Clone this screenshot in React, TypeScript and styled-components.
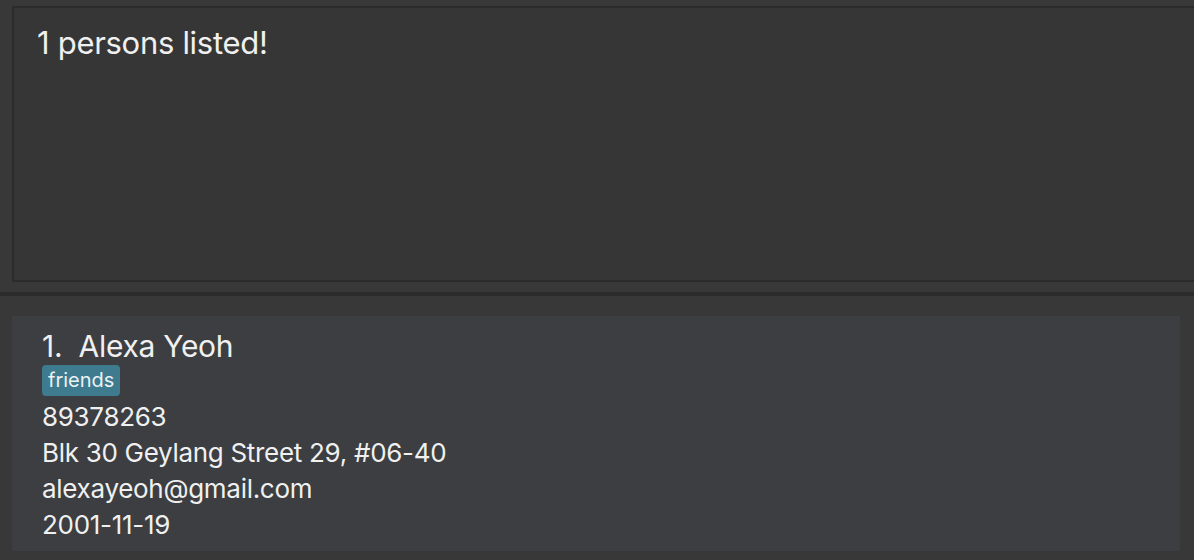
import React from 'react';
import styled, { createGlobalStyle } from 'styled-components';

const GlobalStyle = createGlobalStyle`
  html, body {
    margin: 0;
    padding: 0;
    background: #383838;
    font-family: Inter, "Noto Sans", sans-serif;
    color: #f0f0f0;
    overflow: hidden;
  }
`;

interface Person {
    name: string;
    tags: string[];
    phone: string;
    address: string;
    email: string;
    birthday: string;
}

const persons: Person[] = [
    {
        name: 'Alexa Yeoh',
        tags: ['friends'],
        phone: '89378263',
        address: 'Blk 30 Geylang Street 29, #06-40',
        email: 'alexayeoh@gmail.com',
        birthday: '2001-11-19',
    },
];

export default function App() {
    return (
        <>
            <GlobalStyle />
            <Window>
                <ResultDisplay>{persons.length} persons listed!</ResultDisplay>
                <Divider />
                <PersonList>
                    {persons.map((p, i) => (
                        <PersonCard key={p.email}>
                            <Name>{i + 1}.&nbsp;&nbsp;{p.name}</Name>
                            <Tags>
                                {p.tags.map(t => <Tag key={t}>{t}</Tag>)}
                            </Tags>
                            <Field>{p.phone}</Field>
                            <Field>{p.address}</Field>
                            <Field>{p.email}</Field>
                            <Field>{p.birthday}</Field>
                        </PersonCard>
                    ))}
                </PersonList>
            </Window>
        </>
    );
}

const Window = styled.div`
width: 1194px;
height: 560px;
display: flex;
flex-direction: column;
`;

const ResultDisplay = styled.div`
margin: 6px 0 0 12px;
height: 257px;
border: 2px solid #2b2b2b;
border-right: none;
background: #363636;
padding: 15px 0 0 23px;
font-size: 31px;
line-height: 40px;
letter-spacing: -0.3px;
`;

const Divider = styled.div`
margin-top: 10px;
height: 4px;
background: #2b2b2b;
`;

const PersonList = styled.div`
padding: 20px 14px 0 12px;
`;

const PersonCard = styled.div`
background: #3c3e41;
height: 235px;
box-sizing: border-box;
padding: 12px 30px 0;
display: flex;
flex-direction: column;
`;

const Name = styled.div`
font-size: 30px;
line-height: 36px;
letter-spacing: -0.3px;
`;

const Tags = styled.div`
display: flex;
gap: 6px;
margin: 1px 0 3px;
`;

const Tag = styled.span`
background: #3e7b8f;
border-radius: 4px;
padding: 0 6px;
height: 31px;
line-height: 30px;
font-size: 20px;
color: #ecf2f4;
`;

const Field = styled.div`
font-size: 26px;
line-height: 36px;
letter-spacing: -0.3px;
`;
